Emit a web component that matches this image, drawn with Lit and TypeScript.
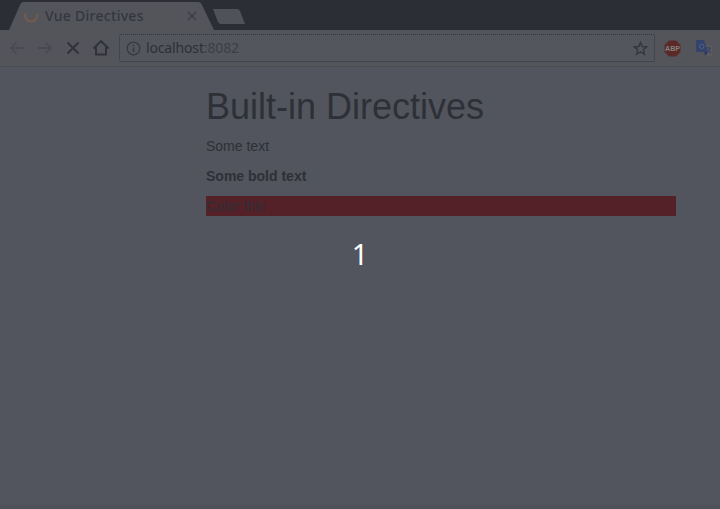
import { LitElement, html, css } from "lit";
import { customElement } from "lit/decorators.js";

@customElement("browser-chrome")
class BrowserChrome extends LitElement {
  static styles = css`
    :host { display: block; font-family: "Noto Sans", sans-serif; color: #343740; }
    svg { display: block; flex: none; fill: none; }
    .strip { height: 30px; background: #2c2e36; display: flex; position: relative; box-sizing: border-box; padding-left: 24px; }
    .shape { position: absolute; left: 0; top: 0; }
    .tab { position: relative; display: flex; align-items: center; width: 176px; height: 28px; margin-top: 2px; }
    .title { font-size: 14px; line-height: 20px; font-weight: 500; letter-spacing: 0.28px; margin-left: 6px; flex: 1; white-space: nowrap; }
    .bar { height: 37px; box-sizing: border-box; border-bottom: 1px solid #4a4c52; background: #53555b; display: flex; align-items: center; padding: 0 7px 0 8px; }
    .nav { display: flex; gap: 10px; }
    .address { margin-left: 9px; width: 536px; height: 28px; flex: none; box-sizing: border-box; border: 1px dotted #35363a; border-radius: 2px; background: #54565d; display: flex; align-items: center; padding: 0 6px; }
    .url { font-size: 14px; line-height: 20px; margin-left: 5px; flex: 1; white-space: nowrap; letter-spacing: -0.15px; }
    .host { color: #2d3038; }
    .port { color: #3c3e46; }
    .abp { margin-left: 9px; }
    .tr { margin-left: 15px; }
  `;
  render() {
    return html`
      <div class="strip">
        <svg class="shape" width="260" height="30">
          <path d="M9 30 L20 5 Q21 2 24 2 H198 Q201 2 202 5 L214 30Z" fill="#53555b" />
          <path d="M213 9 H237 Q239 9 240 11 L245 24 H221 Q219 24 218 22Z" fill="#505259" />
        </svg>
        <div class="tab">
          <svg width="15" height="16" viewBox="0 0 15 16"><path d="M1.500 5.500A6 6 0 1 0 13 6" stroke="#745a4a" stroke-width="2.200" /></svg>
          <span class="title">Vue Directives</span>
          <svg width="16" height="16" viewBox="0 0 16 16"><path d="M4 4l8 8M12 4l-8 8" stroke="#3a3c43" stroke-width="1.300" /></svg>
        </div>
      </div>
      <div class="bar">
        <div class="nav">
          <svg width="18" height="18" viewBox="0 0 18 18"><path d="M16 9H3M8.500 3.500L3 9l5.500 5.500" stroke="#494b52" stroke-width="1.800" /></svg>
          <svg width="18" height="18" viewBox="0 0 18 18"><path d="M2 9h13M9.500 3.500L15 9l-5.500 5.500" stroke="#494b52" stroke-width="1.800" /></svg>
          <svg width="18" height="18" viewBox="0 0 18 18"><path d="M3.500 3.500l11 11M14.500 3.500l-11 11" stroke="#303239" stroke-width="1.900" /></svg>
          <svg width="18" height="18" viewBox="0 0 18 18"><path d="M1.500 9.500L9 2l7.500 7.500M4 8v7.500h10V8" stroke="#303239" stroke-width="1.900" /></svg>
        </div>
        <div class="address">
          <svg width="15" height="15" viewBox="0 0 15 15"><circle cx="7.500" cy="7.500" r="6.300" stroke="#373940" stroke-width="1.300" /><path d="M7.500 6.500v4.500M7.500 3.700v1.600" stroke="#373940" stroke-width="1.600" /></svg>
          <span class="url"><span class="host">localhost</span><span class="port">:8082</span></span>
          <svg width="15" height="15" viewBox="0 0 15 15"><path d="M7.500 1.500l1.700 4 4.600.4-3.500 2.900 1.100 4.500-3.900-2.400-3.900 2.400 1.100-4.500-3.500-2.900 4.600-.4z" stroke="#34363e" stroke-width="1.400" /></svg>
        </div>
        <svg class="abp" width="17" height="17" viewBox="0 0 17 17">
          <path d="M5 .5h7L16.500 5v7L12 16.500H5L.5 12V5z" fill="#5b2a28" />
          <text x="8.500" y="11.200" text-anchor="middle" font-family="Liberation Sans, sans-serif" font-size="7" font-weight="700" fill="#85817f">ABP</text>
        </svg>
        <svg class="tr" width="17" height="17" viewBox="0 0 17 17">
          <path d="M7 5h8q1 0 1 1v9l-1 1H9z" fill="#5a5b60" />
          <path d="M1 0h7l4 12H1q-1 0-1-1V1q0-1 1-1z" fill="#34436a" />
          <path d="M8 12h4l-2.500 4z" fill="#2d385b" />
          <circle cx="5.800" cy="6.300" r="2.200" stroke="#566389" stroke-width="1" />
          <path d="M10 8h5M12.500 7v1M14 8q-1 3-3 4M12 10l3 3" stroke="#3a4463" stroke-width="1.200" />
        </svg>
      </div>`;
  }
}

@customElement("app-root")
class AppRoot extends LitElement {
  static styles = css`
    :host { display: block; position: relative; height: 509px; overflow: hidden; box-sizing: border-box; border-bottom: 4px solid #4e5157; background: #52555d; color: #2e3038; font: 14px/20px "Liberation Sans", Arial, sans-serif; }
    main { width: 470px; margin: 20px 0 0 206px; }
    h1 { margin: 0 0 10px; font-size: 36px; line-height: 39px; font-weight: 400; }
    p { margin: 0 0 10px; }
    .bold { font-weight: 700; }
    .color { background: #542128; color: #2f2e36; }
    .count { position: absolute; left: 0; right: 0; top: 234px; text-align: center; font: 29px/40px "Noto Sans", sans-serif; color: #fff; }
  `;
  render() {
    return html`
      <browser-chrome></browser-chrome>
      <main>
        <h1>Built-in Directives</h1>
        <p>Some text</p>
        <p class="bold">Some bold text</p>
        <p class="color">Color this</p>
      </main>
      <div class="count">1</div>`;
  }
}
